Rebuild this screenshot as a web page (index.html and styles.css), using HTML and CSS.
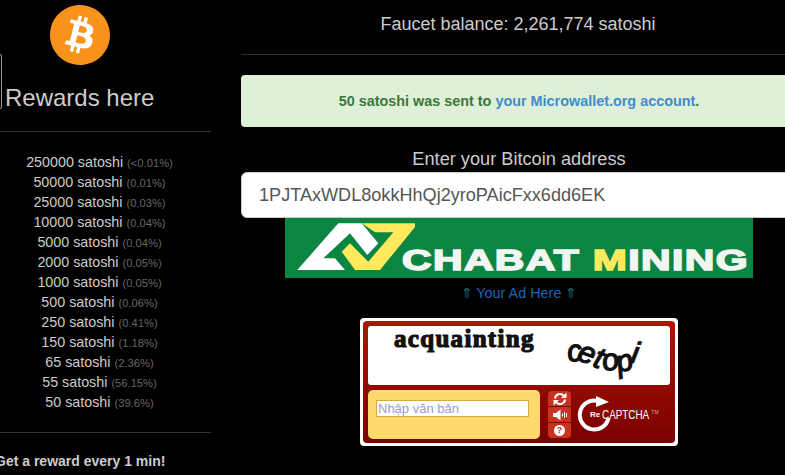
FILE: index.html
```html
<!DOCTYPE html>
<html lang="en">

<head>
    <meta charset="UTF-8">
    <meta name="viewport" content="width=device-width, initial-scale=1.0">
    <title>Bitcoin Faucet</title>
    <link rel="stylesheet" href="styles.css">
</head>

<body>
    <div class="page">
        <div class="sidebar">
            <div class="logo-wrap">
                <svg class="logo" viewBox="0 0 64 64" width="60" height="60">
                    <path fill="#f7931a" d="M63.04 39.741c-4.274 17.143-21.638 27.575-38.783 23.301C7.12 58.768-3.313 41.404.962 24.262 5.234 7.117 22.597-3.317 39.737.957c17.144 4.274 27.576 21.64 23.302 38.784z"/>
                    <path fill="#fff" d="M46.11 27.441c.636-4.258-2.606-6.547-7.039-8.074l1.438-5.768-3.512-.875-1.4 5.616c-.922-.23-1.87-.447-2.812-.662l1.41-5.653-3.509-.875-1.439 5.766c-.764-.174-1.514-.346-2.242-.527l.004-.018-4.842-1.209-.934 3.75s2.605.597 2.55.634c1.422.355 1.68 1.296 1.636 2.042l-1.638 6.571c.098.025.225.061.365.117l-.37-.092-2.297 9.205c-.174.432-.615 1.08-1.609.834.035.051-2.552-.637-2.552-.637l-1.743 4.02 4.57 1.139c.85.213 1.683.436 2.502.646l-1.453 5.835 3.507.875 1.44-5.772c.957.26 1.887.5 2.797.726L27.504 50.8l3.511.875 1.453-5.823c5.987 1.133 10.49.676 12.383-4.738 1.527-4.36-.075-6.875-3.225-8.516 2.294-.531 4.022-2.04 4.483-5.157zM38.087 38.69c-1.086 4.36-8.426 2.004-10.807 1.412l1.928-7.729c2.38.594 10.011 1.77 8.88 6.317zm1.085-11.312c-.99 3.966-7.1 1.951-9.083 1.457l1.748-7.01c1.983.494 8.367 1.416 7.335 5.553z"/>
                </svg>
            </div>
            <div class="rewards-head">
                <span class="cut-box"></span>
                <h2>Rewards here</h2>
            </div>
            <hr class="side-rule">
            <ul class="rewards">
                <li>250000 satoshi <small>(&lt;0.01%)</small></li>
                <li>50000 satoshi <small>(0.01%)</small></li>
                <li>25000 satoshi <small>(0.03%)</small></li>
                <li>10000 satoshi <small>(0.04%)</small></li>
                <li>5000 satoshi <small>(0.04%)</small></li>
                <li>2000 satoshi <small>(0.05%)</small></li>
                <li>1000 satoshi <small>(0.05%)</small></li>
                <li>500 satoshi <small>(0.06%)</small></li>
                <li>250 satoshi <small>(0.41%)</small></li>
                <li>150 satoshi <small>(1.18%)</small></li>
                <li>65 satoshi <small>(2.36%)</small></li>
                <li>55 satoshi <small>(56.15%)</small></li>
                <li>50 satoshi <small>(39.6%)</small></li>
            </ul>
            <hr class="side-rule side-rule-low">
            <p class="every">Get a reward every 1 min!</p>
        </div>

        <div class="main">
            <p class="balance">Faucet balance: 2,261,774 satoshi</p>
            <hr class="main-rule">
            <div class="alert">50 satoshi was sent to <a href="#">your Microwallet.org account</a>.</div>
            <label class="address-label" for="address">Enter your Bitcoin address</label>
            <input class="address" id="address" type="text" value="1PJTAxWDL8okkHhQj2yroPAicFxx6dd6EK">

            <div class="banner">
                <svg class="banner-mark" viewBox="0 0 130 60" width="130" height="60">
                    <polygon fill="#fff" points="12.3,52 60,52 50,40.3 38.3,40.3 65,15.3 82.3,37 93.3,25.3 76.7,5.3 53.3,5.3"/>
                    <polygon fill="#ffe95c" points="76.7,5.3 133,5.3 95,52 70,52 56.7,33.7 65,25.3 83.3,43.7 108.3,14.3 90,14.3"/>
                </svg>
                <span class="banner-text">CHABAT <span class="banner-m">M</span>INING</span>
            </div>
            <a class="ad-link" href="#">&#8657; Your Ad Here &#8657;</a>

            <div class="captcha">
                <div class="captcha-inner">
                    <div class="captcha-image">
                        <span class="word-one">acquainting</span>
                        <span class="word-two"><i class="l1">c</i><i class="l2">e</i><i class="l3">t</i><i class="l4">o</i><i class="l5">p</i><i class="l6">i</i></span>
                    </div>
                    <div class="captcha-row">
                        <div class="captcha-entry">
                            <input class="captcha-input" type="text" placeholder="Nhập văn bản">
                        </div>
                        <div class="captcha-btns">
                            <span class="captcha-btn">
                                <svg viewBox="0 0 14 14" width="14" height="14">
                                    <path fill="none" stroke="#fff" stroke-width="2.2" d="M2 6.5a5 5 0 0 1 8.5-3M12 7.5a5 5 0 0 1-8.5 3"/>
                                    <polygon fill="#fff" points="8,6 13.5,6 13.5,0.5"/>
                                    <polygon fill="#fff" points="6,8 0.5,8 0.5,13.5"/>
                                </svg>
                            </span>
                            <span class="captcha-btn">
                                <svg viewBox="0 0 14 14" width="14" height="14">
                                    <polygon fill="#fff" points="0,5 3,5 7.5,1.5 7.5,12.5 3,9 0,9"/>
                                    <path fill="none" stroke="#fff" d="M9.5 5.5v3M11.5 4v6M13.5 5v4"/>
                                </svg>
                            </span>
                            <span class="captcha-btn"><span class="help">?</span></span>
                        </div>
                        <div class="recaptcha">
                            <svg class="re-arc" viewBox="0 0 36 36" width="36" height="36">
                                <path fill="none" stroke="#fff" stroke-width="4" d="M21 5a14.5 14.5 0 1 0 10.5 17"/>
                                <polygon fill="#fff" points="19,0 32,6 19,11"/>
                            </svg>
                            <span class="re-word">Re</span><span class="captcha-word">CAPTCHA</span><span class="tm">TM</span>
                        </div>
                    </div>
                </div>
            </div>
        </div>
    </div>
</body>

</html>
```

FILE: styles.css
```css
html,
body {
    margin: 0;
    padding: 0;
    height: 475px;
    overflow: hidden;
    background-color: #000;
}

body {
    font-family: "Liberation Sans", Arial, sans-serif;
    font-size: 14px;
    color: #ccc;
}

.page {
    display: flex;
    align-items: flex-start;
    width: 797px;
}

.sidebar {
    flex: 0 0 211px;
    width: 211px;
    margin-right: 30px;
}

.logo-wrap {
    width: 160px;
    padding-top: 5px;
    text-align: center;
}

.logo {
    display: block;
    margin: 0 auto;
}

.rewards-head {
    display: flex;
    align-items: flex-start;
    height: 54px;
    margin-top: -11px;
}

.cut-box {
    flex: 0 0 6px;
    box-sizing: border-box;
    height: 55px;
    margin-left: -4px;
    margin-right: 3px;
    border: 1px solid #999;
    border-radius: 2px;
}

.rewards-head h2 {
    margin: 31px 0 0;
    font-size: 24px;
    font-weight: 400;
    line-height: 26px;
    color: #ccc;
    white-space: nowrap;
}

hr {
    border: 0;
    height: 1px;
    margin: 0;
    background-color: #333;
}

.side-rule {
    margin-top: 23px;
}

.rewards {
    list-style: none;
    margin: 20px 0 0;
    padding: 0;
    width: 199px;
    text-align: center;
}

.rewards li {
    height: 20px;
    line-height: 20px;
    font-size: 14.3px;
    white-space: nowrap;
}

.rewards small {
    font-size: 11.2px;
    color: #666;
}

.side-rule-low {
    margin-top: 20px;
}

.every {
    margin: 20px 0 0 -5px;
    font-weight: 700;
    line-height: 16px;
    color: #ccc;
    white-space: nowrap;
}

.main {
    flex: 0 0 556px;
    width: 556px;
    text-align: center;
}

.balance {
    margin: 0;
    padding: 14px 2px 0 0;
    font-size: 18px;
    line-height: 20px;
    color: #ccc;
}

.main-rule {
    margin-top: 20px;
}

.alert {
    box-sizing: border-box;
    height: 52px;
    margin-top: 20px;
    line-height: 52px;
    font-size: 14.4px;
    font-weight: 700;
    color: #3c763d;
    background-color: #dff0d8;
    border-radius: 4px;
}

.alert a {
    color: #428bca;
    text-decoration: none;
}

.address-label {
    display: block;
    margin-top: 22px;
    font-size: 18.2px;
    line-height: 20px;
    color: #ccc;
}

.address {
    display: block;
    box-sizing: border-box;
    width: 100%;
    height: 46px;
    margin: 3px 0 0;
    padding: 0 17px;
    border: 1px solid #ccc;
    border-radius: 6px;
    font-family: inherit;
    font-size: 18.1px;
    color: #555;
    background-color: #fff;
}

.banner {
    display: flex;
    align-items: flex-end;
    width: 468px;
    height: 60px;
    margin: 0 auto;
    overflow: hidden;
    background-color: #0a8542;
}

.banner-mark {
    flex: 0 0 130px;
}

.banner-text {
    margin: 0 0 3px -13px;
    font-size: 29px;
    line-height: 29px;
    font-weight: 700;
    color: #f2f6f2;
    letter-spacing: 1px;
    -webkit-text-stroke: 1.5px #f2f6f2;
    white-space: nowrap;
    transform: scaleX(1.41);
    transform-origin: left bottom;
}

.banner-m {
    color: #ffe95c;
    -webkit-text-stroke-color: #ffe95c;
}

.ad-link {
    display: block;
    margin-top: 5px;
    line-height: 20px;
    font-size: 14.4px;
    color: #1d63b8;
    text-decoration: none;
}

.captcha {
    box-sizing: border-box;
    width: 318px;
    height: 128px;
    margin: 15px auto 0;
    padding: 3px;
    background-color: #fff;
    border-radius: 4px;
}

.captcha-inner {
    height: 100%;
    box-sizing: border-box;
    padding: 5px;
    background: linear-gradient(#b01505, #7a0000);
    border-radius: 4px;
}

.captcha-image {
    display: flex;
    align-items: flex-start;
    box-sizing: border-box;
    height: 59px;
    padding-left: 26px;
    overflow: hidden;
    background-color: #fff;
    border-radius: 3px;
    font-family: "Liberation Serif", serif;
    color: #111;
}

.word-one {
    font-size: 25px;
    line-height: 26px;
    font-weight: 700;
    letter-spacing: 1.3px;
    -webkit-text-stroke: 1.2px #111;
}

.word-two {
    display: flex;
    margin-top: 11px;
    margin-left: 32px;
    font-family: "Liberation Sans", sans-serif;
    font-size: 30px;
    line-height: 30px;
    -webkit-text-stroke: 1.3px #111;
}

.word-two i {
    display: block;
    font-style: italic;
}

.l1 { transform: translateY(-1px) rotate(-10deg); }
.l2 { transform: translate(-3px, 1px) rotate(20deg); }
.l3 { transform: translate(-3px, 6px) rotate(20deg); }
.l4 { transform: translate(-5px, 8px) rotate(-10deg); }
.l5 { transform: translate(-7px, 9px) rotate(-15deg); }
.l6 { transform: translate(-8px, 1px) rotate(10deg); }

.captcha-row {
    display: flex;
    align-items: flex-start;
    margin-top: 5px;
}

.captcha-entry {
    box-sizing: border-box;
    width: 172px;
    height: 49px;
    padding: 10px 11px 0 8px;
    background-color: #ffd86e;
    border-radius: 5px;
}

.captcha-input {
    display: block;
    box-sizing: border-box;
    width: 100%;
    height: 17px;
    padding: 0 1px;
    border: 1px solid #d4a843;
    border-radius: 0;
    font-family: "Liberation Sans", sans-serif;
    font-size: 13px;
    background-color: #fff;
}

.captcha-input::placeholder {
    color: #9aa0c0;
    opacity: 1;
}

.captcha-btns {
    display: flex;
    flex-direction: column;
    gap: 1px;
    width: 23px;
    height: 47px;
    margin: 1px 0 0 8px;
    overflow: hidden;
    background-color: #6e0c05;
    border-radius: 4px;
}

.captcha-btn {
    display: flex;
    align-items: center;
    justify-content: center;
    flex: 1;
    background-color: #c8321e;
}

.help {
    width: 11px;
    height: 11px;
    line-height: 11px;
    font-size: 9px;
    font-weight: 700;
    text-align: center;
    color: #c8321e;
    background-color: #fff;
    border-radius: 50%;
}

.recaptcha {
    display: flex;
    align-items: center;
    height: 36px;
    margin: 6px 0 0 6px;
    color: #fff;
    white-space: nowrap;
}

.re-arc {
    flex: 0 0 36px;
}

.re-word {
    margin-left: -23px;
    font-size: 8px;
    font-weight: 700;
}

.captcha-word {
    margin-left: 2px;
    font-size: 13px;
    transform: scaleX(0.76);
    transform-origin: left center;
}

.tm {
    margin-left: -13px;
    margin-top: -5px;
    font-size: 5px;
    color: #d8a8a0;
}
```
